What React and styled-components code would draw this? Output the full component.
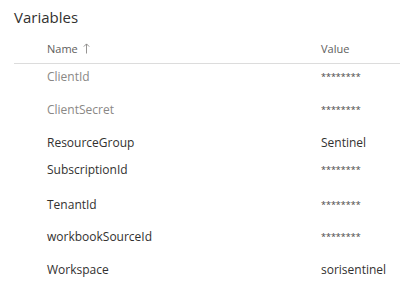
import React from 'react';
import styled, { createGlobalStyle } from 'styled-components';

const GlobalStyle = createGlobalStyle`
  body {
    margin: 0;
    background: #fff;
    font-family: "Open Sans", "Noto Sans", sans-serif;
  }
`;

const Panel = styled.div`
  width: 400px;
  height: 285px;
  padding: 6px 0 0 14px;
  box-sizing: border-box;
  overflow: hidden;
`;

const Title = styled.h2`
  margin: 0;
  font-size: 15px;
  font-weight: 400;
  color: #323130;
  line-height: 22px;
`;

const HeaderRow = styled.div`
  display: grid;
  grid-template-columns: 274px 1fr;
  height: 31px;
  align-items: center;
  margin-top: 5px;
  border-bottom: 1px solid #dcdcdc;
  padding-left: 33px;
  font-size: 11px;
  color: #605e5c;
  box-sizing: border-box;
`;

const HeaderCell = styled.div`
  display: flex;
  align-items: center;
  gap: 5px;
`;

const Row = styled.div`
  display: grid;
  grid-template-columns: 274px 1fr;
  height: ${p => p.$h}px;
  padding: 5px 0 0 33px;
  box-sizing: border-box;
  font-size: 12px;
  line-height: 16px;
`;

const Name = styled.div`
  color: ${p => (p.$muted ? '#8a8886' : '#323130')};
`;

const Value = styled.div`
  color: ${p => (p.$secret ? '#484644' : '#323130')};
  font-size: ${p => (p.$secret ? '9px' : '12px')};
`;

const SortArrow = () => (
  <svg width="7" height="11" viewBox="0 0 7 11" fill="none" stroke="#8a8886" strokeWidth="0.9">
    <path d="M3.5 10.5V1M0.8 3.6L3.5 0.9L6.2 3.6" />
  </svg>
);

const rows = [
  { name: 'ClientId', value: '********', muted: true, secret: true, h: 33 },
  { name: 'ClientSecret', value: '********', muted: true, secret: true, h: 33 },
  { name: 'ResourceGroup', value: 'Sentinel', h: 27 },
  { name: 'SubscriptionId', value: '********', secret: true, h: 35 },
  { name: 'TenantId', value: '********', secret: true, h: 32 },
  { name: 'workbookSourceId', value: '********', secret: true, h: 33 },
  { name: 'Workspace', value: 'sorisentinel', h: 28 },
];

export default function App() {
  return (
    <>
      <GlobalStyle />
      <Panel>
        <Title>Variables</Title>
        <HeaderRow>
          <HeaderCell>
            Name <SortArrow />
          </HeaderCell>
          <HeaderCell>Value</HeaderCell>
        </HeaderRow>
        {rows.map(r => (
          <Row key={r.name} $h={r.h}>
            <Name $muted={r.muted}>{r.name}</Name>
            <Value $secret={r.secret}>{r.value}</Value>
          </Row>
        ))}
      </Panel>
    </>
  );
}
